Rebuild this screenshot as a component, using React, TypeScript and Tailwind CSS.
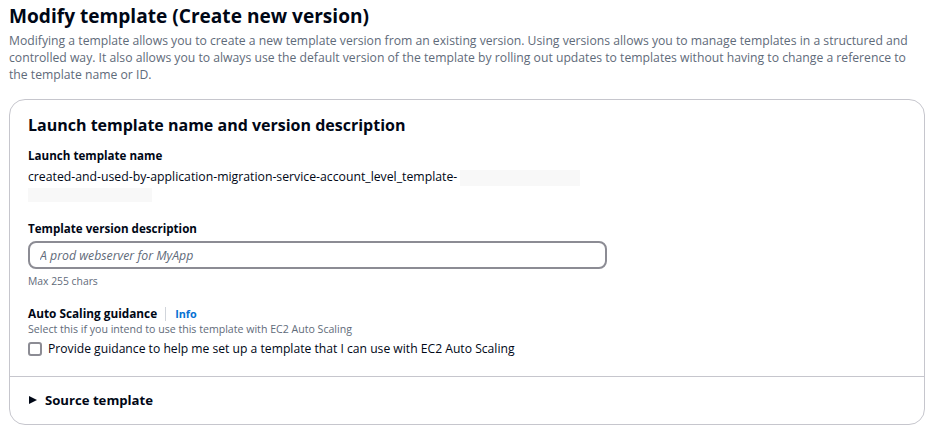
export default function App() {
  return (
    <div className="min-h-screen bg-white px-[9px] pt-[2px] font-['Open_Sans',sans-serif] text-[#000716]">
      <h1 className="text-[19.1px] font-bold leading-[28px]">Modify template (Create new version)</h1>
      <p className="mt-[2px] text-[12.2px] leading-[17px] text-[#5f6b7a]">
        Modifying a template allows you to create a new template version from an existing version. Using versions allows you to manage templates in a structured and controlled way. It also allows you to always use the default version of the template by rolling out updates to templates without having to change a reference to the template name or ID.
      </p>

      <div className="mt-[16px] w-[916px] rounded-[16px] border border-[#c6c6cd]">
        <div className="px-[18px] pb-[18px] pt-[14px]">
          <h2 className="text-[16px] font-bold leading-[22px]">Launch template name and version description</h2>

          <div className="mt-[10px]">
            <div className="text-[11.6px] font-bold leading-[20px]">Launch template name</div>
            <div className="mt-[1px] text-[12.25px] leading-[19px]">
              created-and-used-by-application-migration-service-account_level_template-
              <span className="ml-[3px] inline-block h-[16px] w-[120px] bg-[#f8f8f8] align-middle" />
            </div>
            <div className="mt-[2px] h-[14px] w-[124px] bg-[#f8f8f8]" />
          </div>

          <div className="mt-[17px]">
            <div className="text-[11.6px] font-bold leading-[20px]">Template version description</div>
            <input
              className="mt-[2px] h-[28px] w-[579px] rounded-[8px] border-2 border-[#8c8c94] px-[10px] text-[12.3px] italic placeholder:text-[#5f6b7a]"
              placeholder="A prod webserver for MyApp"
            />
            <div className="mt-[4px] text-[10.35px] leading-[16px] text-[#5f6b7a]">Max 255 chars</div>
          </div>

          <div className="mt-[16px]">
            <div className="flex items-center text-[11.8px] leading-[17px]">
              <span className="font-bold">Auto Scaling guidance</span>
              <span className="ml-[8px] mr-[9px] h-[14px] w-px bg-[#d1d5db]" />
              <span className="text-[10.8px] font-bold text-[#0972d3]">Info</span>
            </div>
            <div className="text-[10.6px] leading-[14px] text-[#5f6b7a]">Select this if you intend to use this template with EC2 Auto Scaling</div>
            <label className="mt-[4px] flex items-center gap-[6px] text-[12.15px] leading-[18px]">
              <span className="h-[14px] w-[14px] rounded-[3px] border-2 border-[#8c8c94]" />
              Provide guidance to help me set up a template that I can use with EC2 Auto Scaling
            </label>
          </div>
        </div>

        <div className="flex items-center gap-[8px] border-t border-[#c6c6cd] px-[19px] pb-[14px] pt-[13px] text-[13.15px] font-bold leading-[20px]">
          <svg width="8" height="10" viewBox="0 0 8 10">
            <path d="M0 1 L8 5 L0 9 Z" fill="#000716" />
          </svg>
          Source template
        </div>
      </div>
    </div>
  );
}
